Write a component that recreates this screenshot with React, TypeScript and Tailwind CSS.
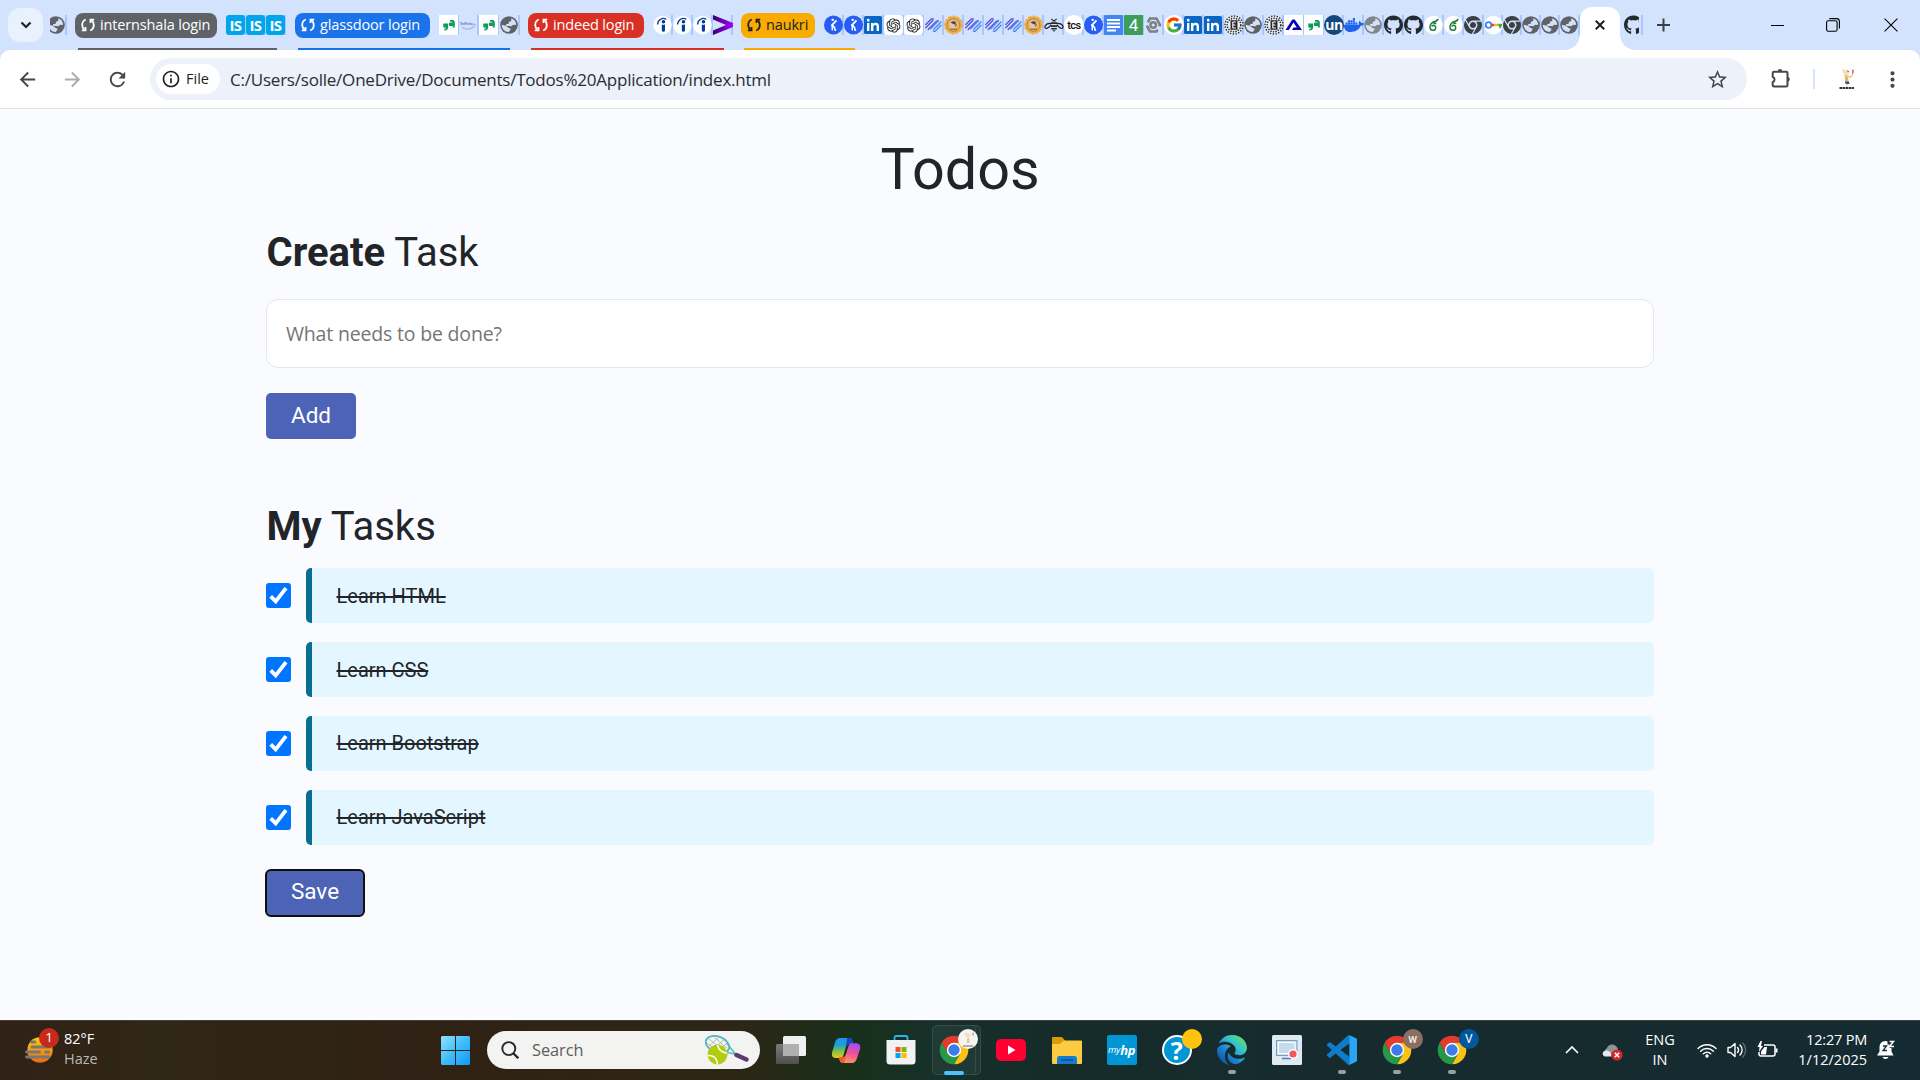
import type { ReactNode } from "react";
import {
  MdArrowBack,
  MdArrowForward,
  MdInfoOutline,
  MdMoreVert,
  MdRefresh,
  MdStarBorder,
} from "react-icons/md";
import { FaChrome, FaDocker, FaEdge, FaGithub } from "react-icons/fa6";
import { FcGoogle } from "react-icons/fc";
import { RiOpenaiFill } from "react-icons/ri";

/* ---------- favicons ---------- */

const Globe = ({ color = "#5f6368" }: { color?: string }) => (
  <svg viewBox="0 0 18 18" className="h-[18px] w-[18px] shrink-0">
    <circle cx="9" cy="9" r="8.8" fill={color} />
    <path
      d="M11.3 2.2c2.6.9 4.6 3 4.9 6.2l-1.200.6-1.900-.300-1.600 1.500-2-.2-3-.1-.6-1.600 2.700-.5.4-2 2.200-.7z"
      fill="#d3e0f8"
    />
    <path d="M1.800 8.800l4.100.9 3.200 2.600 1.600.5-.7 1.600-1.400 1.600C4.700 16 1.700 12.600 1.800 8.800z" fill="#d3e0f8" />
  </svg>
);

const IS = () => (
  <span className="flex h-5 w-[19px] shrink-0 items-center justify-center rounded-[3px] bg-[#00a5ec] font-['Open_Sans',sans-serif] text-[15px] font-bold leading-none tracking-[-0.5px] text-white">
    IS
  </span>
);

const Glassdoor = () => (
  <svg viewBox="0 0 19 20" className="h-5 w-[19px] shrink-0">
    <rect width="19" height="20" fill="#fff" />
    <path d="M4.300 8.500h4.900v3.800c0 2-1.200 3.100-3.900 3.200v-1.700c1.200 0 1.800-.3 1.900-1.100H5.600c-.9 0-1.300-.4-1.300-1.200z" fill="#0b9b5a" />
    <path d="M11 5h2.300c1.600 0 2.500.9 2.500 2.500v5h-2V11h-2.600c-.8 0-1.200-.4-1.200-1.200V8.700c0-.8.400-1.200 1.200-1.200h2.400c0-.5-.3-.8-.8-.8H11z" fill="#0b9b5a" />
  </svg>
);

const TextLogo = () => (
  <svg viewBox="0 0 18 20" className="h-5 w-[18px] shrink-0">
    <text x="0.5" y="9.5" fontSize="4.2" fontFamily="Liberation Sans" fontWeight="700" fill="#6f97d2" textLength="14">
      TestPanku
    </text>
    <path d="M3 12c3 3 10 3.200 13.500-3" fill="none" stroke="#bcb8e8" strokeWidth="1.600" />
  </svg>
);

const Indeed = () => (
  <svg viewBox="0 0 20 20" className="h-5 w-[19px] shrink-0">
    <circle cx="10" cy="10" r="9.700" fill="#fff" />
    <circle cx="11" cy="6.600" r="1.900" fill="#003a9b" />
    <path d="M9.300 9.500q1.700.7 3.300-.3v6.500q0 1.500-1.650 1.500T9.300 15.700z" fill="#003a9b" />
    <path d="M4.800 9.500C5.200 4.500 9.800 1.600 14 4" fill="none" stroke="#003a9b" strokeWidth="1.400" />
  </svg>
);

const Accenture = () => (
  <svg viewBox="0 0 20 20" className="h-5 w-[20px] shrink-0">
    <defs>
      <linearGradient id="acc" x1="0" x2="1">
        <stop offset="0" stopColor="#3c006e" />
        <stop offset="1" stopColor="#a100ff" />
      </linearGradient>
    </defs>
    <path d="M0 0l20 8v4L0 20v-4.500L13 10 0 4.500z" fill="url(#acc)" />
  </svg>
);

const BlueRunner = () => (
  <svg viewBox="0 0 20 20" className="h-5 w-[19px] shrink-0">
    <circle cx="10" cy="10" r="10" fill="#275df5" />
    <circle cx="9.200" cy="4.600" r="1.300" fill="#fff" />
    <path d="M13.200 5.200L8.600 9.900q2.900 2.300 3.500 6.300" fill="none" stroke="#fff" strokeWidth="1.900" />
    <path d="M8.200 9.600q.9 3 .5 6" fill="none" stroke="#fff" strokeWidth="1.500" />
  </svg>
);

const LinkedIn = () => (
  <svg viewBox="0 0 18 18" className="h-[18px] w-[18px] shrink-0">
    <rect width="18" height="18" rx="1.5" fill="#0a66c2" />
    <path d="M3 7h2.400v8H3zM4.200 2.800a1.400 1.400 0 110 2.900 1.400 1.400 0 010-2.900zM7 7h2.300v1.100c.4-.8 1.300-1.300 2.500-1.300 2.400 0 3.200 1.400 3.200 3.700V15h-2.400v-4c0-1.200-.2-2.100-1.400-2.100s-1.800.9-1.800 2.100v4H7z" fill="#fff" />
  </svg>
);

const Gpt = () => (
  <span className="flex h-5 w-[19px] shrink-0 items-center justify-center rounded-[4px] bg-white">
    <RiOpenaiFill className="h-[17px] w-[17px] text-[#202124]" />
  </span>
);

const Weave = () => (
  <svg viewBox="0 0 19 18" className="h-[18px] w-[19px] shrink-0">
    <g fill="none" strokeWidth="1.400" strokeLinecap="round" strokeLinejoin="round">
      <path d="M1.800 8.600l5.500-5.500q1-.9 2 0M1.800 11.800l7-7.200M4.200 13.600l8-8.200q1-.9 2 0" stroke="#5a55e0" />
      <path d="M17 9.200l-5.600 5.700q-1 .9-2 0M17 6l-7.200 7.300M14.500 4.500l-7.800 8.200" stroke="#4f86f2" />
    </g>
  </svg>
);

const Badge = () => (
  <svg viewBox="0 0 20 20" className="h-5 w-[19px] shrink-0">
    <circle cx="10" cy="10" r="8.900" fill="#f1b24a" stroke="#eead45" strokeWidth="2" strokeDasharray="3.500 1" />
    <circle cx="10" cy="10" r="6.800" fill="#edb25a" stroke="#a98048" strokeWidth="1" />
    <circle cx="10" cy="9.500" r="4" fill="#d9cdbd" />
    <path d="M7 7.500q3-3 6 0l-2 2z" fill="#3f4450" />
    <path d="M11 9l3-.5q0 3-2.500 3.500z" fill="#d8643a" />
    <path d="M6.500 14.500h7" stroke="#946a2c" strokeWidth="1.200" />
  </svg>
);

const Bee = () => (
  <svg viewBox="0 0 20 20" className="h-5 w-[20px] shrink-0">
    <g fill="none" stroke="#25282d" strokeWidth="1.200">
      <path d="M7 8.500Q2.500 8 .8 11.500q.2 2.200 2.200 1.900Q6 12.500 7 9.500M13 8.500q4.500-.5 6.200 3-.2 2.200-2.200 1.900Q14 12.500 13 9.500" />
      <path d="M8.600 5L7.400 3.800M11.400 5l1.200-1.200" />
    </g>
    <path d="M8.200 6.500a1.800 1.800 0 013.600 0zM6.800 7.300h6.400v1.800H6.800zM7 10.300h6v1.700H7zM7.200 13h5.600v1.400H7.200zM8.300 15.300h3.400L10 16.800z" fill="#25282d" />
  </svg>
);

const Tcs = () => (
  <span className="flex h-5 w-5 shrink-0 items-center justify-center rounded-full bg-white font-['Roboto',sans-serif] text-[11px] font-medium leading-none tracking-[-0.5px] text-[#111]">
    tcs
  </span>
);

const Docs = () => (
  <svg viewBox="0 0 19 20" className="h-5 w-[19px] shrink-0">
    <rect width="19" height="20" rx="1" fill="#4285f4" />
    <path d="M3 4h13v2H3zM3 7.500h13v2H3zM3 11h13v2H3zM3 14.500h9v2H3z" fill="#fff" />
  </svg>
);

const Four = () => (
  <span className="flex h-5 w-[19px] shrink-0 items-center justify-center rounded-[1px] bg-[#3d9e5c] font-['Roboto',sans-serif] text-[17px] leading-none text-white">
    4
  </span>
);

const HexNut = () => (
  <svg viewBox="0 0 18 18" className="h-[18px] w-[18px] shrink-0">
    <path d="M6 2.500h6.500L16 9l-3.500 6.500H6L2.500 9z" fill="none" stroke="#7d8084" strokeWidth="2.600" strokeDasharray="15.500 3.500" />
    <circle cx="9.200" cy="9" r="4" fill="#7d8084" />
    <circle cx="9.200" cy="9" r="1.600" fill="#d3e3fd" />
  </svg>
);

const Google = () => (
  <span className="flex h-5 w-5 shrink-0 items-center justify-center rounded-full bg-white">
    <FcGoogle className="h-[18px] w-[18px]" />
  </span>
);

const DottedE = () => (
  <svg viewBox="0 0 20 20" className="h-5 w-[20px] shrink-0">
    <circle cx="10" cy="10" r="9.500" fill="#eceff3" />
    <g fill="none" stroke="#24272b">
      <circle cx="10" cy="10" r="9" strokeWidth="1.400" strokeDasharray="1.400 1.400" />
      <circle cx="10" cy="10" r="6.800" strokeWidth="1.500" strokeDasharray="1.400 1.200" />
    </g>
    <rect x="6.500" y="5.200" width="7" height="9.600" fill="#2a2c30" />
    <path d="M8.600 7h3.200M8.600 10h2.700M8.600 13h3.200M8.800 7v6" stroke="#fff" strokeWidth="1.100" />
  </svg>
);

const LetterA = () => (
  <svg viewBox="0 0 19 20" className="h-5 w-[19px] shrink-0">
    <rect width="19" height="20" fill="#fff" />
    <path d="M1.500 15L8.300 4.500h2.400L18 15H8l1.600-2.600h3.200L9.500 7.500 4.800 15z" fill="#0505b5" />
  </svg>
);

const Un = () => (
  <span className="flex h-5 w-5 shrink-0 items-center justify-center rounded-full bg-[#14477e] pb-[1px] font-['Open_Sans',sans-serif] text-[14px] font-bold leading-none tracking-[-0.5px] text-white">
    un
  </span>
);

const Six = () => (
  <svg viewBox="0 0 20 20" className="h-5 w-[19px] shrink-0">
    <circle cx="10" cy="10" r="9.800" fill="#fff" />
    <path d="M15 3.500Q13.500 6.500 10 6.500 6 9 6.300 12.800c.4 3.600 5.400 3.700 6 .4.400-2.800-2.200-3.800-4.300-1.700M10 6.500Q8.500 8 13 8.500" fill="none" stroke="#1d7a3e" strokeWidth="1.500" />
  </svg>
);

const Key = () => (
  <svg viewBox="0 0 20 20" className="h-5 w-[19px] shrink-0">
    <circle cx="10" cy="10" r="9.800" fill="#fff" />
    <circle cx="4.800" cy="10" r="3" fill="none" stroke="#4285f4" strokeWidth="2" />
    <path d="M7.500 10H11" stroke="#ea4335" strokeWidth="2.600" />
    <path d="M11 10h4" stroke="#fbbc04" strokeWidth="2.600" />
    <path d="M15 8.700h4v2.600h-1v2h-2v-2h-1z" fill="#34a853" />
  </svg>
);

const SmallChrome = () => <FaChrome className="h-[18px] w-[18px] shrink-0 text-[#3c4043]" />;
const Github = () => <FaGithub className="h-5 w-[19px] shrink-0 text-[#24292f]" />;

const Tab = ({ children, narrow = false }: { children: ReactNode; narrow?: boolean }) => (
  <div
    className={
      narrow
        ? "relative flex h-5 w-[19px] shrink-0 items-center"
        : "relative flex h-5 w-5 shrink-0 items-center"
    }
  >
    <span className="absolute right-0 top-0 h-5 w-[2px] bg-[#a8c7fa]" />
    <span className="relative flex">{children}</span>
  </div>
);

const SyncIcon = () => (
  <svg viewBox="0 0 14 14" className="h-[14px] w-[14px] shrink-0">
    <g fill="none" stroke="currentColor" strokeWidth="1.800">
      <path d="M4.800 1.500C2.500 2.400 1.200 4.600 1.200 7c0 2 .9 3.700 2.400 4.800M9.200 12.500c2.300-.9 3.600-3.100 3.600-5.500 0-2-.9-3.700-2.400-4.800" />
      <path d="M.8 12.400h3.700V9M13.200 1.600H9.500V5" />
    </g>
  </svg>
);

interface GroupProps {
  label: string;
  className: string;
  underline: string;
  children: ReactNode;
}

const Group = ({ label, className, underline, children }: GroupProps) => (
  <div className="relative flex h-[50px] items-center gap-[9px]">
    <span
      className={`flex h-[25px] items-center gap-[5px] rounded-[8px] pl-[6px] font-['Open_Sans',sans-serif] text-[14.5px] tracking-[-0.15px] ${className}`}
    >
      <SyncIcon />
      <span className="whitespace-nowrap pb-px">{label}</span>
    </span>
    <div className="flex">{children}</div>
    <span className={`absolute bottom-0 left-[3px] h-[2px] ${underline}`} />
  </div>
);

const TabStrip = () => (
  <div className="flex h-[50px] items-center pl-2">
    <button className="flex h-[34px] w-[35px] items-center justify-center rounded-[12px] bg-[#e9f0fe]">
      <svg viewBox="0 0 12 8" className="h-2 w-3">
        <path d="M1.500 1.500L6 6l4.500-4.500" fill="none" stroke="#1f1f1f" strokeWidth="2.200" />
      </svg>
    </button>
    <div className="ml-[7px] mr-2 flex h-5 items-center">
      <span className="flex w-[15px] justify-end overflow-hidden">
        <Globe />
      </span>
      <span className="h-5 w-[2px] bg-[#a8c7fa]" />
    </div>
    <div className="flex gap-[9px]">
      <Group label="internshala login" className="w-[142px] bg-[#5f6368] text-white" underline="w-[199px] bg-[#5f6368]">
        <Tab><IS /></Tab>
        <Tab><IS /></Tab>
        <Tab><IS /></Tab>
      </Group>
      <Group label="glassdoor login" className="w-[135px] bg-[#1a73e8] text-white" underline="w-[212px] bg-[#1a73e8]">
        <Tab><Glassdoor /></Tab>
        <Tab><TextLogo /></Tab>
        <Tab><Glassdoor /></Tab>
        <div className="ml-px mr-[-1px] flex">
          <Tab><Globe /></Tab>
        </div>
      </Group>
      <Group label="indeed login" className="w-[116px] bg-[#d93025] text-white" underline="w-[193px] bg-[#d93025]">
        <Tab><Indeed /></Tab>
        <Tab><Indeed /></Tab>
        <Tab><Indeed /></Tab>
        <Tab><Accenture /></Tab>
      </Group>
      <div className="-ml-px flex">
        <Group label="naukri" className="w-[74px] bg-[#f9ab00] text-[#202124]" underline="w-[111px] bg-[#f9ab00]">
          <Tab><BlueRunner /></Tab>
          <Tab><BlueRunner /></Tab>
          <Tab><LinkedIn /></Tab>
          <Tab><Gpt /></Tab>
          <Tab><Gpt /></Tab>
          <Tab><Weave /></Tab>
          <Tab><Badge /></Tab>
          <Tab><Weave /></Tab>
          <Tab><Weave /></Tab>
          <Tab><Weave /></Tab>
          <Tab><Badge /></Tab>
          <Tab><Bee /></Tab>
          <Tab><Tcs /></Tab>
          <Tab><BlueRunner /></Tab>
          <Tab><Docs /></Tab>
          <Tab><Four /></Tab>
          <Tab><HexNut /></Tab>
          <Tab><Google /></Tab>
          <Tab><LinkedIn /></Tab>
          <Tab><LinkedIn /></Tab>
          <Tab><DottedE /></Tab>
          <Tab><Globe /></Tab>
          <Tab><DottedE /></Tab>
          <Tab><LetterA /></Tab>
          <Tab><Glassdoor /></Tab>
          <Tab><Un /></Tab>
          <Tab><FaDocker className="h-5 w-5 text-[#1d63ed]" /></Tab>
          <Tab><Globe color="#80868b" /></Tab>
          <Tab><Github /></Tab>
          <Tab><Github /></Tab>
          <Tab><Six /></Tab>
          <Tab><Six /></Tab>
          <Tab><SmallChrome /></Tab>
          <Tab narrow><Key /></Tab>
          <Tab narrow><SmallChrome /></Tab>
          <Tab narrow><Globe /></Tab>
          <Tab narrow><Globe /></Tab>
          <Tab><Globe /></Tab>
        </Group>
      </div>
    </div>
    <div className="relative mt-[7px] flex h-[43px] w-10 shrink-0 items-center justify-center rounded-t-[12px] bg-white pb-[7px]">
      <span className="absolute -left-[15px] bottom-0 h-[15px] w-[15px] bg-[radial-gradient(circle_at_0_0,transparent_14.5px,white_15px)]" />
      <span className="absolute -right-[15px] bottom-0 h-[15px] w-[15px] bg-[radial-gradient(circle_at_100%_0,transparent_14.5px,white_15px)]" />
      <svg viewBox="0 0 10 10" className="h-[10px] w-[10px]">
        <path d="M.8.8l8.400 8.400M9.200.8L.8 9.200" stroke="#1f1f1f" strokeWidth="2" />
      </svg>
    </div>
    <div className="ml-1 flex h-5 items-center gap-[2px]">
      <span className="w-[15px] overflow-hidden">
        <Github />
      </span>
      <span className="h-5 w-[2px] bg-[#a8c7fa]" />
    </div>
    <svg viewBox="0 0 14 14" className="ml-[14px] h-[14px] w-[14px] shrink-0">
      <path d="M6.500 .5v13M0 7h13" stroke="#3c4043" strokeWidth="2" />
    </svg>
    <div className="ml-auto flex items-center pr-[22px] text-black">
      <svg viewBox="0 0 13 13" className="mr-[42px] h-[13px] w-[13px]">
        <path d="M0 6.500h13" stroke="currentColor" />
      </svg>
      <svg viewBox="0 0 14 14" className="mr-[44px] h-[14px] w-[14px]">
        <g fill="none" stroke="currentColor" strokeWidth="1.100">
          <rect x=".6" y="2.800" width="10.500" height="10.500" rx="1.800" />
          <path d="M3.300.6h7.200a2.900 2.900 0 012.900 2.900v7" />
        </g>
      </svg>
      <svg viewBox="0 0 14 14" className="h-[14px] w-[14px]">
        <path d="M.6.6l12.800 12.800M13.400.6L.6 13.400" stroke="currentColor" strokeWidth="1.100" />
      </svg>
    </div>
  </div>
);

const Toolbar = () => (
  <div className="flex h-[59px] items-center rounded-t-[10px] border-b border-[#dfe1e5] bg-white pl-4 pr-[15px] text-[#474747]">
    <MdArrowBack className="h-[23px] w-[23px] shrink-0" />
    <MdArrowForward className="ml-[22px] h-[23px] w-[23px] shrink-0 text-[#ababab]" />
    <MdRefresh className="ml-[22px] h-[23px] w-[23px] shrink-0" />
    <div className="ml-[21px] flex h-[42px] w-[1597px] items-center rounded-full bg-[#ecf1fa] pl-[6px]">
      <div className="flex h-[30px] w-16 shrink-0 items-center gap-[5px] rounded-full bg-white pl-[5px] text-[#1f1f1f]">
        <MdInfoOutline className="h-5 w-5 shrink-0" />
        <span className="font-['Open_Sans',sans-serif] text-[14.5px] leading-5">File</span>
      </div>
      <span className="ml-[10px] pt-px font-['Open_Sans',sans-serif] text-[17px] tracking-[-0.22px] text-[#2b2d31]">
        C:/Users/solle/OneDrive/Documents/Todos%20Application/index.html
      </span>
      <MdStarBorder className="ml-auto mr-[18px] h-[23px] w-[23px]" />
    </div>
    <svg viewBox="0 0 20 20" className="ml-[24px] h-5 w-5 shrink-0">
      <path
        d="M3.200 2.800H15.200q1.300 0 1.300 1.300v12.200q0 1.300-1.300 1.300H3q-1.300 0-1.300-1.300v-3.200a2.900 2.900 0 000-5.400V4.100q0-1.300 1.500-1.300z"
        fill="none"
        stroke="currentColor"
        strokeWidth="2"
      />
      <path d="M6.800 2.200a2.200 2.200 0 014.400 0zM17 8a2.300 2.300 0 010 4.500z" fill="currentColor" />
    </svg>
    <span className="ml-[22px] h-5 w-[2px] bg-[#d3e3fd]" />
    <svg viewBox="0 0 16 22" className="ml-[24px] h-[22px] w-4">
      <path d="M3.500 1l6 1.500 1 3-3.500 2-3.500-3z" fill="#f7dcc0" />
      <path d="M13 1.500l2 .5-.5 3.500-1.500 1z" fill="#dc7a6c" />
      <path d="M8 2.800l2 1" stroke="#777" />
      <path d="M5 7.500l4 .5 2 1.500L14 6.500" fill="none" stroke="#f2c48a" strokeWidth="1.400" />
      <path d="M6 8.500h3l.5 5.500H6z" fill="#e9b94e" />
      <path d="M6 13.500h4l.5 2.500H6.500z" fill="#4a4f86" />
      <path d="M8 16v3" stroke="#eac9a8" />
      <path d="M.5 20h15" stroke="#333" strokeWidth="1.800" strokeDasharray="2.500 .5" />
    </svg>
    <MdMoreVert className="ml-auto h-[25px] w-[25px]" />
  </div>
);

/* ---------- page ---------- */

const tasks = ["Learn HTML", "Learn CSS", "Learn Bootstrap", "Learn JavaScript"];

const Page = () => (
  <main className="flex flex-1 flex-col items-center bg-[#f9fbff] pt-[26px] font-['Roboto',sans-serif] text-[#212529]">
    <h1 className="text-[57.5px] leading-[69px]">Todos</h1>
    <div className="flex w-[1388px] flex-col items-start">
      <h2 className="mt-[25px] pl-[0.5px] text-[40px] leading-[48px]">
        <span className="font-bold">Create</span> Task
      </h2>
      <div className="mt-[22px] flex h-[69px] w-full items-center rounded-[12px] border border-[#e4e7eb] bg-white pl-[19px]">
        <span className="font-['Open_Sans',sans-serif] text-[19.5px] tracking-[-0.18px] text-[#757575]">
          What needs to be done?
        </span>
      </div>
      <button className="mt-[25px] h-[46px] w-[90px] rounded-[5px] bg-[#4c63b6] pb-[3px] text-[22.5px] leading-[34px] text-white">
        Add
      </button>
      <h2 className="mt-[64px] pl-[0.5px] text-[40px] leading-[48px]">
        <span className="font-bold">My</span> Tasks
      </h2>
      <ul className="mt-[17.4px] flex w-full flex-col gap-[18.75px]">
        {tasks.map((task) => (
          <li key={task} className="flex h-[55px] items-center">
            <span className="flex h-[25px] w-[25px] items-center justify-center rounded-[3px] bg-[#0075ff]">
              <svg viewBox="0 0 25 25" className="h-[25px] w-[25px]">
                <path d="M4.700 13.300l5 5L20 5.200" fill="none" stroke="#fff" strokeWidth="3.800" />
              </svg>
            </span>
            <div className="ml-[15px] flex h-full flex-1 items-center rounded-[5px] border-l-[6px] border-[#096f92] bg-[#e4f6ff] pl-[24.5px]">
              <span className="text-[20px] leading-[30px] line-through">{task}</span>
            </div>
          </li>
        ))}
      </ul>
      <button className="mt-[25.35px] h-[46px] w-[98px] rounded-[5px] bg-[#4c63b6] pb-[3px] text-[22.5px] leading-[34px] text-white outline-2 -outline-offset-1 outline-[#101010]">
        Save
      </button>
    </div>
  </main>
);

/* ---------- taskbar ---------- */

const ChromeLogo = () => (
  <svg viewBox="1 1 46 46" className="h-[30px] w-[30px]">
    <path d="M4.950 13A22 22 0 0143.050 13H24L14.470 29.500z" fill="#e33b2e" />
    <path d="M24 13h19.050A22 22 0 0124 46l9.530-16.500z" fill="#fbc116" />
    <path d="M4.950 13l9.520 16.500h19.060L24 46A22 22 0 014.950 13z" fill="#279847" />
    <circle cx="24" cy="24" r="11" fill="#fff" />
    <circle cx="24" cy="24" r="8.700" fill="#3a7cec" />
  </svg>
);

interface AppCellProps {
  children: ReactNode;
  running?: boolean;
  badge?: ReactNode;
}

const AppCell = ({ children, running = false, badge }: AppCellProps) => (
  <div className="relative flex h-full w-[55.1px] items-center justify-center pb-px">
    {children}
    {badge}
    {running && <span className="absolute bottom-[6px] h-1 w-2 rounded-full bg-[#9aa09f]" />}
  </div>
);

const TennisRacket = () => (
  <svg viewBox="0 0 44 30" className="ml-auto mr-[11px] h-[30px] w-11">
    <g fill="none" strokeLinecap="round">
      <ellipse cx="12.500" cy="9.500" rx="12.200" ry="8" transform="rotate(22 12.500 9.500)" fill="#f3f6f6" stroke="#54b9b8" strokeWidth="1.800" />
      <path d="M4 4l15 12M9 2l13 11M2 8l9 7M3 12L14 2M7 15L20 4M13 17l9-9" stroke="#a9a4a8" strokeWidth=".8" />
      <path d="M22 8.500l8 10M20 17l10 2" stroke="#54b9b8" strokeWidth="1.500" />
      <path d="M31.500 20l10 4.500" stroke="#5b3a70" strokeWidth="4.300" />
    </g>
    <circle cx="12.500" cy="19.500" r="10" fill="#b2cc10" />
    <path d="M12.500 10c1 4.500 4 7.500 9.500 8M2.800 20.500c6-.5 9.500 3 9.500 9" fill="none" stroke="#fff" strokeWidth="1.500" />
  </svg>
);

const Taskbar = () => (
  <footer className="flex h-[60px] items-center border-t border-[#45413a] bg-[linear-gradient(90deg,#312116_0,#2f2717_150px,#2f2416_300px,#302115_440px,#2e2415_580px,#2c2616_740px,#18301a_850px,#16302a_930px,#152c29_1060px,#172b2f_1300px,#152b2e_1600px,#152b33_1920px)] font-['Open_Sans',sans-serif] text-[14.5px] text-white">
    <div className="flex w-[441px] items-center pb-[3px] pl-[25px]">
      <div className="relative h-[27px] w-[28px]">
        <svg viewBox="0 0 28 27" className="h-[27px] w-[28px]">
          <defs>
            <linearGradient id="sun" x2="0" y2="1">
              <stop offset="0" stopColor="#fbd00b" />
              <stop offset="1" stopColor="#ee6a0a" />
            </linearGradient>
          </defs>
          <circle cx="15" cy="14" r="12.700" fill="url(#sun)" />
          <path d="M6.500 6h3.500M7 11h18M1.500 16h13M20.500 16h3M1.500 21h22" stroke="#77767a" strokeWidth="2.800" strokeLinecap="round" />
        </svg>
        <span className="absolute -top-[8px] left-[14px] flex h-5 w-5 items-center justify-center rounded-full bg-[#c42b1c] text-[13.5px] leading-none">
          1
        </span>
      </div>
      <div className="ml-[11px] flex flex-col leading-5">
        <span>82°F</span>
        <span className="text-[#bdb7b1]">Haze</span>
      </div>
    </div>

    <svg viewBox="0 0 29 29" className="h-[29px] w-[29px] shrink-0">
      <defs>
        <linearGradient id="win" x2="1" y2="1">
          <stop offset="0" stopColor="#8fe3fb" />
          <stop offset=".5" stopColor="#3fbdfb" />
          <stop offset="1" stopColor="#1098f7" />
        </linearGradient>
      </defs>
      <path d="M1 0h13v14H0V1zM15 0h13l1 1v13H15zM0 15h14v14H1l-1-1zM15 15h14v13l-1 1H15z" fill="url(#win)" />
    </svg>
    <div className="mb-px ml-[17px] flex h-[38px] w-[273px] items-center rounded-full bg-[#f3f3f2] pl-[14px]">
      <svg viewBox="0 0 18 18" className="h-[18px] w-[18px]">
        <circle cx="7.800" cy="7.600" r="6.500" fill="none" stroke="#26282b" strokeWidth="1.900" />
        <path d="M12.300 12.300l5 5" stroke="#26282b" strokeWidth="2.300" />
      </svg>
      <span className="ml-[13px] text-[16.3px] text-[#5c5c5c]">Search</span>
      <TennisRacket />
    </div>

    <div className="ml-[3.5px] flex h-full">
      <AppCell>
        <svg viewBox="0 0 30 28" className="h-7 w-[30px]">
          <defs>
            <linearGradient id="tv1" y1="0" y2="1" x2="0">
              <stop offset="0" stopColor="#7b7b7b" />
              <stop offset="1" stopColor="#4f4f4f" />
            </linearGradient>
          </defs>
          <rect x="0" y="8" width="23" height="20" rx="1.500" fill="url(#tv1)" />
          <rect x="7" y="0" width="23" height="20" rx="1.500" fill="#f0f0f0" />
          <path d="M7 8h16v12H8.500L7 18.500z" fill="#b0b0b0" />
        </svg>
      </AppCell>
      <AppCell>
        <svg viewBox="0 0 30 28" className="h-7 w-[30px]">
          <defs>
            <linearGradient id="cpl" x2="0" y2="1">
              <stop offset="0" stopColor="#2191f0" />
              <stop offset=".35" stopColor="#1f9fd0" />
              <stop offset=".65" stopColor="#7bc04a" />
              <stop offset="1" stopColor="#f5c518" />
            </linearGradient>
            <linearGradient id="cpr" x1=".6" x2=".3" y2="1">
              <stop offset="0" stopColor="#a44cf0" />
              <stop offset=".45" stopColor="#ee4f9a" />
              <stop offset="1" stopColor="#fb9a5c" />
            </linearGradient>
          </defs>
          <path d="M18 2c2 0 3 1.500 3.600 3.800L22 8h-4c-1.800 0-2.600 1-3.200 3l-2.300 8c-.6 2-1.500 3-3.500 3H5c-4 0-4.600-3-3.800-6L4 6.500C4.800 3.500 6.500 2 9 2z" fill="url(#cpl)" />
          <path d="M18 2c2 0 3 1.500 3.600 3.800L22 8h-4c-1.500 0-2.500.8-3 2.200L16 2z" fill="#1446c8" />
          <path d="M12 27c-2 0-3-1.500-3.500-3.500L8 21h4c1.500 0 2.500-1 3-3l2.500-8c.6-2 1.500-2.700 3-2.700H25c4 0 4.800 3 4 6l-3 9c-.9 3-2.500 4.700-5 4.700z" fill="url(#cpr)" />
          <path d="M12 27c-2 0-3-1.500-3.500-3.500L8 21h4c1.300 0 2.300-.7 2.900-2.300L13.500 27z" fill="#f0602c" />
        </svg>
      </AppCell>
      <AppCell>
        <svg viewBox="0 0 30 30" className="h-[30px] w-[30px]">
          <path d="M8.500 6V2.700Q8.500 1 10.200 1h9.600q1.700 0 1.700 1.700V6" fill="none" stroke="#27b4ee" strokeWidth="1.800" />
          <path d="M.5 5h29v21q0 3.500-3.500 3.500H4Q.5 29.500.5 26z" fill="#f2f2f2" />
          <path d="M9.500 12h5v5h-5z" fill="#f25022" />
          <path d="M15.500 12h5v5h-5z" fill="#7fba00" />
          <path d="M9.500 18h5v5h-5z" fill="#00a4ef" />
          <path d="M15.500 18h5v5h-5z" fill="#ffb900" />
        </svg>
      </AppCell>
      <AppCell
        badge={
          <span className="absolute right-[6px] top-2 flex h-5 w-5 justify-center overflow-hidden rounded-full bg-[#f4f4f2]">
            <svg viewBox="0 0 20 20" className="h-5 w-5">
              <path d="M6.500 3.500l5 1 1 2.500-2.500 2-3-2.500z" fill="#f3dcc4" />
              <path d="M14.500 3.500l1.500.5-.5 2.500-1 .5z" fill="#e08a7c" />
              <path d="M9 9h2.500v5H9z" fill="#ecca84" />
              <path d="M5 17h10" stroke="#999" strokeWidth="1.300" />
            </svg>
          </span>
        }
      >
        <span className="absolute left-[3px] top-1 h-[50px] w-[49px] rounded-[5px] border border-white/10 bg-white/5" />
        <span className="absolute left-[3px] top-1 h-[50px] w-[44px] rounded-[5px] border-r border-white/10" />
        <span className="relative -left-[2px]"><ChromeLogo /></span>
        <span className="absolute bottom-[5px] left-[15px] h-1 w-5 rounded-full bg-[#4cc2ff]" />
      </AppCell>
      <AppCell>
        <svg viewBox="0 0 30 22" className="h-[22px] w-[30px]">
          <rect width="30" height="22" rx="5" fill="#ff0033" />
          <path d="M12 6.500l7.500 4.500L12 15.500z" fill="#fff" />
        </svg>
      </AppCell>
      <AppCell>
        <svg viewBox="0 0 30 28" className="h-7 w-[30px]">
          <path d="M0 2q0-1 1-1h9l3 3.500L11 8H0z" fill="#dc9a08" />
          <path d="M0 8h8l4-3.500h17q1 0 1 1V27q0 1-1 1H1q-1 0-1-1z" fill="#fccb42" />
          <path d="M5 28v-5.500Q5 20 7.500 20h15q2.500 0 2.500 2.500V28z" fill="#147bd1" />
          <path d="M9 24h12" stroke="#0a4f8f" strokeWidth="1.500" />
        </svg>
      </AppCell>
      <AppCell>
        <span className="flex h-[30px] w-[30px] items-center justify-center rounded-[2px] bg-[#0096d6] text-[9.5px] italic leading-none tracking-[-0.3px]">
          my<span className="text-[13px] font-bold">hp</span>
        </span>
      </AppCell>
      <AppCell badge={<span className="absolute right-[2px] top-2 h-5 w-5 rounded-full bg-[#ffc20e]" />}>
        <span className="flex h-[30px] w-[30px] items-center justify-center rounded-full border-2 border-white bg-[#0096d6] text-[25px] font-bold leading-none">
          ?
        </span>
      </AppCell>
      <AppCell running>
        <svg className="absolute h-0 w-0">
          <defs>
            <linearGradient id="edge" x1="1" y1=".15" x2=".2" y2="1">
              <stop offset="0" stopColor="#62e264" />
              <stop offset=".35" stopColor="#35c1d0" />
              <stop offset=".65" stopColor="#1a86d4" />
              <stop offset="1" stopColor="#0f4fa0" />
            </linearGradient>
          </defs>
        </svg>
        <FaEdge className="h-[30px] w-[30px]" fill="url(#edge)" />
      </AppCell>
      <AppCell>
        <svg viewBox="0 0 30 30" className="h-[30px] w-[30px]">
          <rect width="30" height="30" rx="1.500" fill="#dfe9f3" />
          <rect x="4.500" y="5.500" width="20.500" height="15" fill="#c9dced" stroke="#7f9cbb" />
          <rect x="6.500" y="7.500" width="16.500" height="11" fill="#c5daec" stroke="#fff" />
          <path d="M10 23.500h9" stroke="#4f86c0" strokeWidth="1.600" />
          <circle cx="21" cy="19" r="5" fill="#fff" />
          <circle cx="21" cy="19" r="3.600" fill="#f0595b" />
        </svg>
      </AppCell>
      <AppCell running>
        <svg viewBox="0 0 24 24" className="h-[30px] w-[30px]">
          <path
            d="M23.150 2.587L18.210.21a1.494 1.494 0 0 0-1.705.29l-9.460 8.630-4.120-3.128a.999.999 0 0 0-1.276.057L.327 7.261A1 1 0 0 0 .326 8.740L3.899 12 .326 15.260a1 1 0 0 0 .001 1.479L1.650 17.940a.999.999 0 0 0 1.276.057l4.120-3.128 9.460 8.630a1.492 1.492 0 0 0 1.704.290l4.942-2.377A1.500 1.500 0 0 0 24 20.060V3.939a1.500 1.500 0 0 0-.850-1.352zm-5.146 14.861L10.826 12l7.178-5.448v10.896z"
            fill="#0f7cc9"
          />
          <path d="M18 .3l5.200 2.300q.8.500.8 1.400v16q0 1-.8 1.400L18 23.700z" fill="#2aa5f2" />
        </svg>
      </AppCell>
      <AppCell
        running
        badge={
          <span className="absolute right-[2px] top-2 flex h-5 w-5 items-center justify-center rounded-full bg-[#8d6e63] font-['Roboto',sans-serif] text-[12px] font-medium leading-none text-[#eee]">
            w
          </span>
        }
      >
        <ChromeLogo />
      </AppCell>
      <AppCell
        running
        badge={
          <span className="absolute right-[1px] top-2 flex h-5 w-5 items-center justify-center rounded-full bg-[#01579b] font-['Roboto',sans-serif] text-[12px] leading-none">
            V
          </span>
        }
      >
        <ChromeLogo />
      </AppCell>
    </div>

    <div className="ml-auto flex items-center pb-[2px] pr-[25px]">
      <svg viewBox="0 0 14 8" className="h-2 w-[14px]">
        <path d="M1 7l6-6 6 6" fill="none" stroke="#fff" strokeWidth="1.700" />
      </svg>
      <svg viewBox="0 0 21 18" className="ml-[23px] mt-1 h-[18px] w-[21px]">
        <path d="M5 12a4 4 0 010-7C6 1.500 11 0 14 3c1.500 1.500 2 3 2 4z" fill="#8f9495" />
        <path d="M3.500 13.500C-.5 13 0 8 3.500 7.500c3-.5 4.500 1 6 3v3z" fill="#e8eaea" />
        <circle cx="15" cy="12" r="5.600" fill="#d1252f" />
        <path d="M12.800 9.800l4.400 4.400M17.200 9.800l-4.400 4.400" stroke="#fff" strokeWidth="1.500" />
      </svg>
      <div className="ml-[22px] w-[30px] text-center leading-5">
        <div>ENG</div>
        <div>IN</div>
      </div>
      <svg viewBox="0 0 20 16" className="ml-[22px] h-4 w-5">
        <g fill="none" stroke="#fff" strokeWidth="1.400" strokeLinecap="round">
          <path d="M1 6.500a12.700 12.700 0 0118 0M3.600 9.200a9 9 0 0112.800 0M6.300 11.800a5.300 5.300 0 017.400 0" />
        </g>
        <circle cx="10" cy="14" r="1.700" fill="#fff" />
      </svg>
      <svg viewBox="0 0 20 16" className="ml-[10px] h-4 w-5">
        <g fill="none" stroke="#fff" strokeWidth="1.400" strokeLinejoin="round" strokeLinecap="round">
          <path d="M1 5.500h2.500L8 1.500v13l-4.500-4H1z" />
          <path d="M10.500 5.500a3.500 3.500 0 010 5M13 3a7 7 0 010 10" />
          <path d="M15.800 1a10 10 0 010 14" stroke="#5d6c6f" />
        </g>
      </svg>
      <svg viewBox="0 0 21 17" className="ml-[10px] h-[17px] w-[21px]">
        <path d="M7 4h9q2 0 2 2v7q0 2-2 2H4q-2 0-2-2v-2" fill="none" stroke="#fff" strokeWidth="1.500" />
        <path d="M18.500 7.500h2v4h-2z" fill="#fff" />
        <path d="M3.500 0L.5 6h2l-.5 5 4-6H4L5 0z" fill="#fff" />
        <path d="M4 13.500v-3L7.500 6H10l-1 7.500z" fill="#fff" />
      </svg>
      <div className="ml-[19px] w-[70px] whitespace-nowrap text-right leading-5">
        <div className="tracking-[-0.2px]">12:27 PM</div>
        <div>1/12/2025</div>
      </div>
      <svg viewBox="0 0 18 20" className="ml-[10px] h-5 w-[18px]">
        <path d="M8.500 1C4.500 1 2.500 4 2.500 7v4.500L0 15.500h16.500l-2-4V7c0-3-2-6-6-6zM5.500 17h6c-.5 2.500-5.500 2.500-6 0z" fill="#fff" />
        <path d="M6 6h3.500L6 10.500h4" fill="none" stroke="#152b33" strokeWidth="1.300" />
        <path d="M10.500 0H18v8h-5.500V4.500h-2z" fill="#152b33" />
        <path d="M12.500 1.500h4l-4 5h4.500" fill="none" stroke="#fff" strokeWidth="1.500" />
      </svg>
    </div>
  </footer>
);

export default function App() {
  return (
    <div className="flex h-[1080px] w-[1920px] flex-col overflow-hidden bg-[#d3e3fd]">
      <TabStrip />
      <Toolbar />
      <Page />
      <Taskbar />
    </div>
  );
}
